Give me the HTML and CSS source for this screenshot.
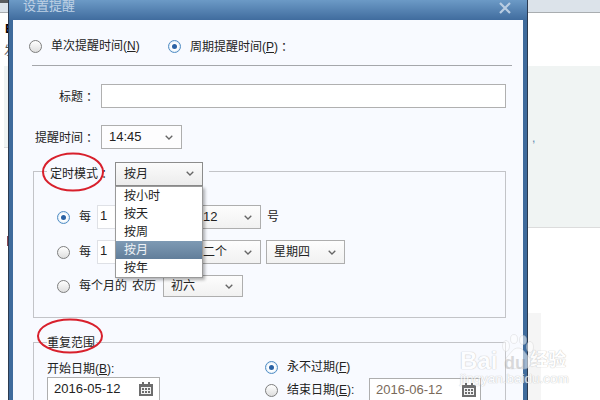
FILE: index.html
```html
<!DOCTYPE html>
<html lang="zh">
<head>
<meta charset="utf-8">
<title>设置提醒</title>
<link rel="stylesheet" href="styles.css">
</head>
<body>
<div class="backdrop">
  <div class="side side-left">
    <div class="band-top"></div>
    <div class="band-white"><b class="frag">E</b><span class="frag2">发</span></div>
    <div class="band-gray"></div>
    <div class="band-rest"><div class="left-mark"></div></div>
  </div>
  <div class="side side-right">
    <div class="band-top"></div>
    <div class="band-white"></div>
    <div class="band-gray band-gray-long"><span class="right-frag">,</span></div>
    <div class="band-rest"><div class="faint-box"></div></div>
  </div>
</div>

<div class="dialog">
  <div class="titlebar">
    <span class="title">设置提醒</span>
    <svg class="close" width="12" height="12" viewBox="0 0 12 12"><path d="M1 1l10 10M11 1L1 11" stroke="#b9cde2" stroke-width="2.2" fill="none"/></svg>
  </div>
  <div class="body">
    <div class="mode-row">
      <span class="radio"></span><span class="mode-label">单次提醒时间(<u>N</u>)</span>
      <span class="radio on"></span><span>周期提醒时间(<u>P</u>)<span class="colon">：</span></span>
    </div>
    <div class="rule"></div>

    <div class="field-row title-row">
      <label class="lbl lbl-title">标题<span class="colon">：</span></label>
      <div class="text-input"></div>
    </div>

    <div class="field-row time-row">
      <label class="lbl lbl-time">提醒时间<span class="colon">：</span></label>
      <div class="sel sel-time"><span class="latin">14:45</span><svg class="chev" width="8" height="5" viewBox="0 0 8 5"><path d="M.7.7L4 4 7.3.7" stroke="#666" stroke-width="1.3" fill="none"/></svg></div>
    </div>

    <div class="group group-mode">
      <div class="legend-row">
        <span class="legend-text">定时模式<span class="colon">：</span></span>
        <div class="sel sel-combo"><span>按月</span><svg class="chev" width="8" height="5" viewBox="0 0 8 5"><path d="M.7.7L4 4 7.3.7" stroke="#666" stroke-width="1.3" fill="none"/></svg></div>
      </div>
      <div class="opt-row opt1">
        <span class="radio on"></span><span class="each">每</span>
        <div class="num-input latin">1</div>
        <div class="sel sel-a"><span class="latin">12</span><svg class="chev" width="8" height="5" viewBox="0 0 8 5"><path d="M.7.7L4 4 7.3.7" stroke="#666" stroke-width="1.3" fill="none"/></svg></div>
        <span class="unit">号</span>
      </div>
      <div class="opt-row opt2">
        <span class="radio"></span><span class="each">每</span>
        <div class="num-input latin">1</div>
        <div class="sel sel-a"><span>二个</span><svg class="chev" width="8" height="5" viewBox="0 0 8 5"><path d="M.7.7L4 4 7.3.7" stroke="#666" stroke-width="1.3" fill="none"/></svg></div>
        <div class="sel sel-b"><span>星期四</span><svg class="chev" width="8" height="5" viewBox="0 0 8 5"><path d="M.7.7L4 4 7.3.7" stroke="#666" stroke-width="1.3" fill="none"/></svg></div>
      </div>
      <div class="opt-row opt3">
        <span class="radio"></span><span class="each each-long">每个月的</span><span class="lunar">农历</span>
        <div class="sel sel-c"><span>初六</span><svg class="chev" width="8" height="5" viewBox="0 0 8 5"><path d="M.7.7L4 4 7.3.7" stroke="#666" stroke-width="1.3" fill="none"/></svg></div>
      </div>
    </div>

    <div class="group group-range">
      <span class="legend-range">重复范围</span>
      <div class="range-cols">
        <div class="range-left">
          <div class="range-label">开始日期(<u>B</u>):</div>
          <div class="date-input"><span class="latin">2016-05-12</span>
            <svg class="cal" width="14" height="14" viewBox="0 0 14 14"><path d="M3 0h2v2h4V0h2v2h3v12H0V2h3z" fill="#6d6d6d"/><path d="M2 5h10v7H2z" fill="#f2f2f2"/><path d="M3 6h2v2H3zM6 6h2v2H6zM9 6h2v2H9zM3 9h2v2H3zM6 9h2v2H6zM9 9h2v2H9z" fill="#6d6d6d"/></svg>
          </div>
        </div>
        <div class="range-right">
          <div class="never-row"><span class="radio on"></span><span>永不过期(<u>F</u>)</span></div>
          <div class="end-row"><span class="radio"></span><span class="end-label">结束日期(<u>E</u>):</span>
            <div class="date-input date-end"><span class="latin">2016-06-12</span>
              <svg class="cal" width="14" height="14" viewBox="0 0 14 14"><path d="M3 0h2v2h4V0h2v2h3v12H0V2h3z" fill="#6d6d6d"/><path d="M2 5h10v7H2z" fill="#f2f2f2"/><path d="M3 6h2v2H3zM6 6h2v2H6zM9 6h2v2H9zM3 9h2v2H3zM6 9h2v2H6zM9 9h2v2H9z" fill="#6d6d6d"/></svg>
            </div>
          </div>
        </div>
      </div>
    </div>
  </div>
</div>

<ul class="popup">
  <li>按小时</li>
  <li>按天</li>
  <li>按周</li>
  <li class="active">按月</li>
  <li>按年</li>
</ul>

<svg class="ring ring-1" width="64" height="42" viewBox="0 0 64 42"><ellipse cx="32" cy="21" rx="30" ry="18.5" fill="none" stroke="#d8202c" stroke-width="2"/></svg>
<svg class="ring ring-2" width="70" height="38" viewBox="0 0 70 38"><ellipse cx="35" cy="19" rx="32" ry="16.5" fill="none" stroke="#d8202c" stroke-width="2"/></svg>

<div class="watermark">
  <svg class="paw" width="36" height="40" viewBox="0 0 36 40"><g fill="#fff" fill-opacity=".75" stroke="#cfcfcf" stroke-opacity=".55"><ellipse cx="6" cy="12" rx="3.5" ry="5.5"/><ellipse cx="14" cy="5" rx="3.5" ry="4.5"/><ellipse cx="23" cy="6" rx="3.5" ry="4.5"/><ellipse cx="30" cy="13" rx="3.5" ry="5.5"/><path d="M18 14c-5 0-7 5-11 9-3 4-2 12 5 12 3 0 4-1 6-1s3 1 6 1c7 0 8-8 5-12-4-4-6-9-11-9z"/></g></svg>
  <span class="wm-bai">Bai</span><span class="wm-du">du</span><span class="wm-jy">经验</span>
  <span class="wm-url">jingyan.baidu.com</span>
</div>
</body>
</html>
```
FILE: styles.css
```css
* { box-sizing: border-box; }
html, body { margin: 0; padding: 0; width: 600px; height: 400px; overflow: hidden; background: #fff; }
body { font: 12px/16px "Liberation Sans", "Noto Sans CJK SC", sans-serif; color: #222; position: relative; }
u { text-decoration: underline; }
.latin { font-size: 13px; }
.colon { font-family: "Noto Sans CJK TC", sans-serif; padding-left: 3px; }

/* page behind the dialog */
.backdrop { display: flex; justify-content: space-between; height: 400px; }
.side-left { width: 8px; overflow: hidden; }
.side-right { width: 72px; }
.side { display: flex; flex-direction: column; height: 400px; }
.band-top { height: 13px; background: #dce3ea; border-bottom: 1px solid #a9adb0; flex: none; }
.side-left .band-top { border-top: 3px solid #5a5d60; }
.band-white { height: 53px; background: #fff; flex: none; position: relative; }
.band-gray { height: 82px; background: #f0f4f3; border-bottom: 1px solid #dcdcdc; flex: none; position: relative; }
.side-left .band-gray { margin-left: 4px; }
.band-gray-long { height: 162px; }
.band-rest { flex: 1; background: #fff; position: relative; }
.left-mark { width: 1px; height: 10px; margin: 88px 0 0 7px; background: #8a4a55; }
.right-frag { display: block; margin: 65px 0 0 4px; font-size: 12px; line-height: 14px; color: #5f86b0; }
.faint-box { width: 13px; height: 87px; margin-top: 85px; background: #f5f5f5; }
.frag { display: block; margin: 8px 0 0 5px; font-size: 13px; color: #000; line-height: 16px; }
.frag2 { display: block; margin: 6px 0 0 4px; font-size: 12px; color: #555; line-height: 16px; white-space: nowrap; }

/* dialog window */
.dialog { position: absolute; left: 8px; top: 0; width: 520px; height: 400px; overflow: hidden;
  background: #3f6b9c; border-left: 1px solid #2b3a50; border-right: 1px solid #2b3a50; padding: 0 4px; }
.titlebar { height: 20px; margin: 0 -4px; padding: 0 14px 0 14px; display: flex; justify-content: space-between; align-items: center;
  background: linear-gradient(#6c9ac6, #406c9e); overflow: hidden; }
.title { font-size: 13px; color: #bdd0e4; margin-top: -8px; line-height: 16px; }
.close { margin-top: -5px; margin-right: 2px; }
.body { height: 380px; background: #f8faff; padding: 18px 0 0 20px; }

.mode-row { display: flex; align-items: center; height: 16px; margin-left: -4px; }
.mode-label { margin-right: 27px; width: 90px; white-space: nowrap; }
.radio { width: 13px; height: 13px; border-radius: 50%; border: 1px solid #7e7e7e; background: linear-gradient(#fff, #dedede); margin-right: 9px; flex: none; display: block; position: relative; }
.radio.on { border-color: #4f8cc4; background: #fff; box-shadow: inset 0 0 2px #a9cbe8; }
.radio.on::after { content: ""; position: absolute; left: 3px; top: 3px; width: 5px; height: 5px; border-radius: 50%; background: #2a62a5; }
.rule { height: 1px; background: #a5a7ab; margin: 11px 11px 0 -1px; }

.field-row { display: flex; align-items: center; }
.lbl { color: #222; white-space: nowrap; }
.title-row { margin-top: 18px; height: 24px; padding-left: 26px; }
.lbl-title { width: 42px; }
.text-input { width: 405px; height: 24px; background: #fff; border: 1px solid #b0b0b0; }
.time-row { margin-top: 17px; height: 24px; padding-left: 2px; }
.lbl-time { width: 66px; }

.sel { display: flex; align-items: center; justify-content: space-between; height: 24px; padding: 0 8px 0 7px; border: 1px solid #aeaeae; background: #fff; flex: none; white-space: nowrap; }
.sel-time { width: 81px; background: #fdfdfe; }
.chev { flex: none; }

.group { border: 1px solid #c3c4c8; width: 473px; position: relative; }
.group-mode { height: 147px; margin-top: 22px; }
.legend-row { display: flex; align-items: center; height: 23px; margin: -10px 0 0 13px; width: 162px; padding-left: 3px; background: #f8faff; }
.legend-text { width: 65px; flex: none; white-space: nowrap; }
.sel-combo { width: 88px; height: 24px; border-color: #8c8c8c; background: linear-gradient(#fbfbfb, #ececec); padding-left: 8px; }

.opt-row { display: flex; align-items: center; height: 24px; padding-left: 23px; }
.opt1 { margin-top: 20px; }
.opt2 { margin-top: 11px; }
.opt3 { margin-top: 11px; height: 22px; }
.each { width: 18px; margin-right: 0; white-space: nowrap; }
.each-long { width: 53px; }
.lunar { width: 31px; }
.num-input { width: 93px; height: 24px; background: #fff; border: 1px solid #dfe1e6; padding-left: 2px; line-height: 20px; margin-right: 5px; }
.sel-a { width: 66px; background: linear-gradient(#fdfdfd, #f1f1f1); }
.sel-b { width: 79px; margin-left: 5px; background: linear-gradient(#fdfdfd, #f1f1f1); }
.unit { margin-left: 6px; }
.sel-c { width: 80px; height: 22px; background: linear-gradient(#fdfdfd, #f1f1f1); padding-right: 9px; }

.group-range { height: 70px; margin-top: 24px; }
.legend-range { position: absolute; left: 13px; top: -8px; padding: 0 1px 0 0; background: #f8faff; white-space: nowrap; line-height: 16px; height: 15px; }
.range-cols { display: flex; padding: 18px 0 0 13px; }
.range-left { width: 218px; }
.range-label { height: 16px; white-space: nowrap; }
.date-input { display: flex; align-items: center; justify-content: space-between; width: 113px; height: 24px; background: #fff; border: 1px solid #aeaeae; padding: 0 6px 0 6px; }
.date-input span { white-space: nowrap; }
.date-end { color: #7a6a5a; width: 112px; padding-right: 4px; }
.range-right { display: flex; flex-direction: column; margin-top: -2px; }
.never-row { display: flex; align-items: center; height: 16px; }
.end-row { display: flex; align-items: center; height: 24px; margin-top: 3px; }
.end-label { width: 82px; white-space: nowrap; }

/* open dropdown list */
.popup { position: absolute; left: 115px; top: 186px; width: 88px; height: 92px; margin: 0; padding: 0; list-style: none;
  background: #fff; border: 1px solid #9a9a9a; box-shadow: 2px 2px 3px rgba(0,0,0,.3); }
.popup li { height: 18px; line-height: 18px; padding-left: 8px; white-space: nowrap; }
.popup li.active { background: linear-gradient(#7e9ab4, #627e9a); color: #eef2f6; }

/* hand-drawn annotation rings */
.ring { position: absolute; }
.ring-1 { left: 41px; top: 151px; }
.ring-2 { left: 35px; top: 317px; }

/* watermark */
.watermark { position: absolute; left: 458px; top: 332px; width: 112px; height: 60px; pointer-events: none; color: #fff; font-weight: bold;
  text-shadow: 0 0 1px #b5b5b5, 0 0 1px #b5b5b5; opacity: .7; }
.paw { position: absolute; left: 42px; top: 2px; }
.wm-bai { position: absolute; left: 2px; top: 16px; font-size: 24px; line-height: 26px; }
.wm-du { position: absolute; left: 46px; top: 21px; font-size: 18px; line-height: 20px; color: #aaa; text-shadow: none; opacity: .6; }
.wm-jy { position: absolute; left: 72px; top: 17px; font-size: 18px; line-height: 22px; }
.wm-url { position: absolute; left: 2px; top: 39px; font-size: 13.5px; font-weight: normal; line-height: 16px; white-space: nowrap; }
```
